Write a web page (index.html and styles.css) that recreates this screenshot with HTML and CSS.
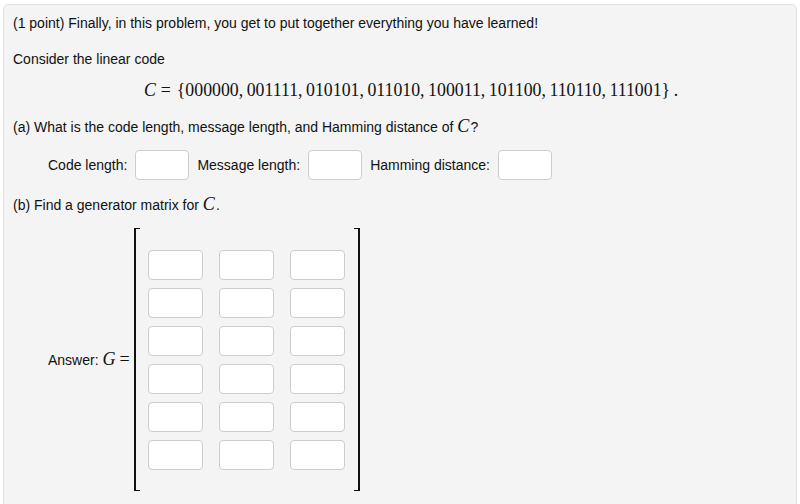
FILE: index.html
```html
<!DOCTYPE html>
<html>
<head>
<meta charset="utf-8">
<link rel="stylesheet" href="styles.css">
</head>
<body>
<div class="panel">
  <p class="line first">(1 point) Finally, in this problem, you get to put together everything you have learned!</p>
  <p class="line">Consider the linear code</p>
  <div class="display"><span class="mi">C</span><span class="mo">=</span>{000000,&#8201;001111,&#8201;010101,&#8201;011010,&#8201;100011,&#8201;101100,&#8201;110110,&#8201;111001}&#8201;.</div>
  <p class="line">(a) What is the code length, message length, and Hamming distance of <span class="mi m-inline">C</span>?</p>
  <div class="fields">
    <label class="lbl">Code length:</label><input class="box" type="text">
    <label class="lbl">Message length:</label><input class="box" type="text">
    <label class="lbl">Hamming distance:</label><input class="box" type="text">
  </div>
  <p class="line">(b) Find a generator matrix for <span class="mi m-inline">C</span>.</p>
  <div class="answer">
    <span class="ans-label">Answer: <span class="mi m-g">G</span><span class="eq">=</span></span>
    <div class="matrix">
      <div class="bracket left"></div>
      <div class="grid">
        <input class="box cell" type="text"><input class="box cell" type="text"><input class="box cell" type="text">
        <input class="box cell" type="text"><input class="box cell" type="text"><input class="box cell" type="text">
        <input class="box cell" type="text"><input class="box cell" type="text"><input class="box cell" type="text">
        <input class="box cell" type="text"><input class="box cell" type="text"><input class="box cell" type="text">
        <input class="box cell" type="text"><input class="box cell" type="text"><input class="box cell" type="text">
        <input class="box cell" type="text"><input class="box cell" type="text"><input class="box cell" type="text">
      </div>
      <div class="bracket right"></div>
    </div>
  </div>
</div>
</body>
</html>
```

FILE: styles.css
```css
html, body {
  margin: 0;
  padding: 0;
  background: #ffffff;
}
body {
  font-family: "Liberation Sans", Arial, Helvetica, sans-serif;
  font-size: 14px;
  color: #111111;
}
.panel {
  margin: 4px 3px 0 3px;
  height: 520px;
  box-sizing: border-box;
  background: #f4f4f4;
  border: 1px solid #e2e2e2;
  border-radius: 5px;
  padding: 9px 9px;
}
.line {
  margin: 0;
  line-height: 18px;
}
.line + .line {
  margin-top: 18px;
}
.display {
  font-family: "Liberation Serif", "Times New Roman", serif;
  font-size: 17.8px;
  text-align: center;
  margin: 11px 0 16px 22px;
  line-height: 22px;
  color: #111;
}
.mi {
  font-family: "Liberation Serif", "Times New Roman", serif;
  font-style: italic;
}
.mo {
  margin: 0 6px 0 5px;
}
.m-inline {
  font-size: 18px;
  margin-right: 1px;
}
.fields {
  display: flex;
  align-items: center;
  margin: 14px 0 0 35px;
  height: 30px;
}
.lbl {
  margin-right: 8px;
}
.box {
  box-sizing: border-box;
  width: 54px;
  height: 30px;
  margin: 0 8px 0 0;
  padding: 0;
  border: 1px solid #cdcdcd;
  border-radius: 4px;
  background: #ffffff;
  font: inherit;
}
.fields + .line {
  margin-top: 15px;
}
.answer {
  display: flex;
  align-items: center;
  margin: 14px 0 0 35px;
}
.ans-label {
  display: flex;
  align-items: center;
}
.m-g {
  font-size: 18px;
  margin-left: 4px;
}
.eq {
  font-family: "Liberation Serif", serif;
  font-size: 18px;
  margin-left: 4px;
  margin-right: 4px;
}
.matrix {
  display: flex;
  align-items: stretch;
  height: 263px;
}
.bracket {
  width: 6px;
  box-sizing: border-box;
  border-top: 1.5px solid #111;
  border-bottom: 1.5px solid #111;
}
.bracket.left {
  border-left: 2px solid #111;
}
.bracket.right {
  border-right: 2px solid #111;
}
.grid {
  display: grid;
  grid-template-columns: 55px 55px 55px;
  grid-auto-rows: 30px;
  column-gap: 16px;
  row-gap: 8px;
  align-content: center;
  padding: 0 9px 0 8px;
}
.cell {
  width: 55px;
  margin: 0;
}
```
